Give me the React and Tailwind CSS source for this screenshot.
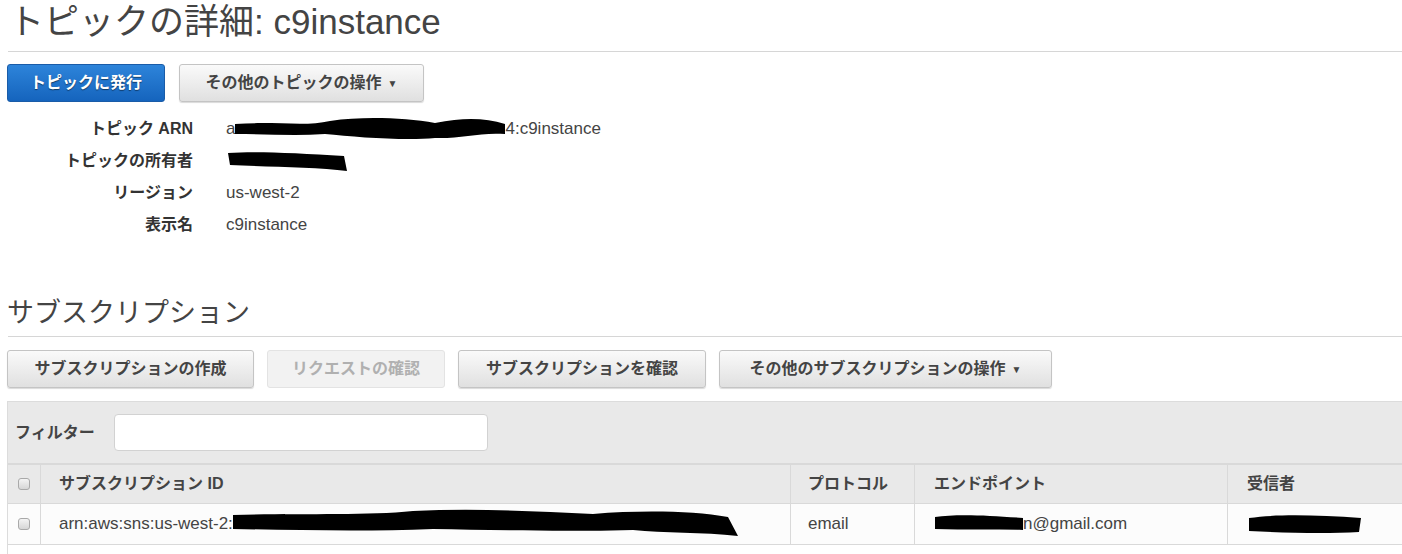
import React from 'react'

const font = { fontFamily: '"Liberation Sans", "Noto Sans CJK JP", sans-serif' }

function Scribble({ w, h = 22, d }) {
  return (
    <svg width={w} height={h} viewBox={`0 0 ${w} ${h}`} className="inline-block align-middle">
      <path d={d} fill="#000" />
    </svg>
  )
}

function Btn({ children, disabled, caret, className = '' }) {
  return (
    <button
      className={
        'h-[38px] rounded-[3px] border px-[19px] text-[16px] font-bold flex items-center gap-1 ' +
        (disabled
          ? 'border-[#e3e3e3] bg-[#f2f2f2] text-[#b0b0b0] '
          : 'border-[#c4c4c4] bg-gradient-to-b from-[#fafafa] to-[#e0e0e0] text-[#444] shadow-[0_1px_1px_rgba(0,0,0,0.15)] ') +
        className
      }
    >
      {children}
      {caret && <span className="text-[10px] ml-[2px]">▼</span>}
    </button>
  )
}

function CheckBox() {
  return <div className="w-[12px] h-[12px] rounded-[3px] border border-[#a9a9a9] bg-gradient-to-b from-[#f4f4f4] to-[#d6d6d6]" />
}

export default function App() {
  return (
    <div className="w-[1402px] h-[554px] overflow-hidden bg-white pl-[7px]" style={font}>
      {/* Title */}
      <h1 className="text-[35px] leading-[44px] text-[#444] pl-[2px]">トピックの詳細: c9instance</h1>
      <div className="h-px bg-[#d6d6d6] mt-[7px] ml-[1px]" />

      <div className="flex gap-[14px] mt-[12px]">
        <button className="h-[38px] w-[158px] rounded-[3px] border border-[#1a5ca8] bg-gradient-to-b from-[#2d84da] to-[#1564bd] text-white text-[16px] font-bold [text-shadow:0_1px_1px_rgba(0,0,0,0.5)]">
          トピックに発行
        </button>
        <Btn caret className="w-[245px] justify-center">その他のトピックの操作</Btn>
      </div>

      {/* Details */}
      <div className="mt-[11px] grid grid-cols-[186px_1fr] gap-x-[33px] text-[16px] leading-[32px]">
        <div className="text-right font-bold text-[#333]">トピック ARN</div>
        <div className="text-[#444] text-[17px] flex items-center">
          <span>a</span>
          <Scribble
            w={270}
            h={26}
            d="M0 8 C40 5 70 11 95 5 C130 0 170 2 200 7 C230 1 250 2 270 8 L270 18 C245 16 225 23 200 22 C170 25 120 21 90 18 C60 20 30 18 0 18 Z"
          />
          <span>4:c9instance</span>
        </div>

        <div className="text-right font-bold text-[#333]">トピックの所有者</div>
        <div className="flex items-center">
          <Scribble w={122} h={26} d="M2 5 C30 3 70 5 118 8 L121 23 C90 19 40 19 4 17 Z" />
        </div>

        <div className="text-right font-bold text-[#333]">リージョン</div>
        <div className="text-[#444] text-[17px]">us-west-2</div>

        <div className="text-right font-bold text-[#333]">表示名</div>
        <div className="text-[#444] text-[17px]">c9instance</div>
      </div>

      {/* Subscriptions */}
      <h2 className="mt-[55px] text-[27px] leading-[34px] text-[#444]">サブスクリプション</h2>
      <div className="h-px bg-[#d6d6d6] mt-[6px] ml-[1px]" />

      <div className="flex gap-[13px] mt-[13px]">
        <Btn className="w-[247px] justify-center">サブスクリプションの作成</Btn>
        <Btn disabled className="w-[178px] justify-center">リクエストの確認</Btn>
        <Btn className="w-[248px] justify-center">サブスクリプションを確認</Btn>
        <Btn caret className="w-[333px] justify-center">その他のサブスクリプションの操作</Btn>
      </div>

      {/* Table */}
      <div className="mt-[13px] border-l border-[#dcdcdc]">
        <div className="h-[62px] bg-[#e9e9e9] border-t border-[#dcdcdc] flex items-center pl-[7px] gap-[19px]">
          <span className="text-[16px] font-bold text-[#444]">フィルター</span>
          <div className="w-[374px] h-[37px] rounded-[4px] border border-[#d2d2d2] bg-white" />
        </div>

        <div className="grid grid-cols-[33px_750px_124px_313px_1fr] text-[16px]">
          <div className="h-[41px] bg-[#e9e9e9] border-t-2 border-b border-r border-[#d9d9d9] flex items-center justify-center">
            <CheckBox />
          </div>
          <div className="h-[41px] bg-[#e9e9e9] border-t-2 border-b border-r border-[#d9d9d9] flex items-center pl-[18px] font-bold text-[#444]">
            サブスクリプション ID
          </div>
          <div className="h-[41px] bg-[#e9e9e9] border-t-2 border-b border-r border-[#d9d9d9] flex items-center pl-[17px] font-bold text-[#444]">
            プロトコル
          </div>
          <div className="h-[41px] bg-[#e9e9e9] border-t-2 border-b border-r border-[#d9d9d9] flex items-center pl-[19px] font-bold text-[#444]">
            エンドポイント
          </div>
          <div className="h-[41px] bg-[#e9e9e9] border-t-2 border-b border-[#d9d9d9] flex items-center pl-[19px] font-bold text-[#444]">
            受信者
          </div>

          <div className="h-[41px] bg-[#fcfcfc] border-b border-r border-[#d9d9d9] flex items-center justify-center">
            <CheckBox />
          </div>
          <div className="h-[41px] bg-[#fcfcfc] border-b border-r border-[#d9d9d9] flex items-center pl-[18px] text-[17px] text-[#444] overflow-hidden whitespace-nowrap">
            <span>arn:aws:sns:us-west-2:</span>
            <Scribble
              w={505}
              h={32}
              d="M0 7 C60 5 130 8 180 3 C240 0 300 3 360 6 C410 2 460 3 495 9 L505 28 C470 24 430 25 400 22 C330 24 260 22 200 21 C130 24 60 22 0 21 Z"
            />
          </div>
          <div className="h-[41px] bg-[#fcfcfc] border-b border-r border-[#d9d9d9] flex items-center pl-[17px] text-[17px] text-[#444]">
            email
          </div>
          <div className="h-[41px] bg-[#fcfcfc] border-b border-r border-[#d9d9d9] flex items-center pl-[20px] text-[17px] text-[#444] whitespace-nowrap">
            <Scribble w={88} h={22} d="M0 4 C20 1 50 2 88 5 L88 17 C60 16 30 17 0 16 Z" />
            <span>n@gmail.com</span>
          </div>
          <div className="h-[41px] bg-[#fcfcfc] border-b border-[#d9d9d9] flex items-center pl-[19px]">
            <Scribble w={117} h={26} d="M2 7 C30 3 70 4 114 7 L112 21 C80 23 40 22 2 20 Z" />
          </div>
        </div>
        <div className="h-[20px]" />
      </div>
    </div>
  )
}
